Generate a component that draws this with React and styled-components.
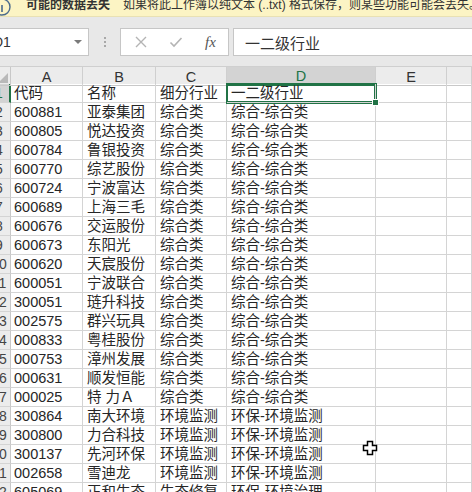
import React from "react";
import styled, { createGlobalStyle } from "styled-components";

const GlobalStyle = createGlobalStyle`
  html, body { margin: 0; padding: 0; background: #ffffff; overflow: hidden; }
  body { font-family: "Liberation Sans", "Noto Sans CJK SC", sans-serif; }
  * { box-sizing: border-box; }
`;

const FONT = `"Liberation Sans", "Noto Sans CJK SC", sans-serif`;

const Page = styled.div`
  width: 472px;
  height: 492px;
  overflow: hidden;
  position: relative;
  background: #fff;
`;

const Banner = styled.div`
  height: 17px;
  background: #fcf4c4;
  border-bottom: 1px solid #e9e1b4;
  display: flex;
  align-items: flex-end;
  overflow: hidden;
  font-family: ${FONT};
  font-size: 12px;
  line-height: 14px;
  color: #333;
  padding-bottom: 4px;
`;

const InfoIcon = styled.svg`
  width: 16px;
  height: 17px;
  flex: none;
  margin-left: -3px;
  align-self: flex-start;
`;

const BannerTitle = styled.span`
  font-weight: bold;
  margin-left: 13px;
  white-space: nowrap;
`;

const BannerText = styled.span`
  margin-left: 13px;
  white-space: nowrap;
`;

const Toolbar = styled.div`
  height: 49px;
  background: #e8e8e8;
  padding-top: 11px;
  display: flex;
  align-items: flex-start;
`;

const NameBox = styled.div`
  width: 89px;
  height: 28px;
  background: #fff;
  border: 1px solid #c6c6c6;
  border-left: none;
  display: flex;
  align-items: center;
  justify-content: space-between;
  font-family: ${FONT};
  font-size: 14px;
  color: #333;
  padding-right: 6px;
`;

const NameText = styled.span`
  margin-left: -7px;
`;

const DropArrow = styled.span`
  width: 0;
  height: 0;
  border-left: 4px solid transparent;
  border-right: 4px solid transparent;
  border-top: 4px solid #7a7a7a;
`;

const Grip = styled.div`
  width: 31px;
  height: 28px;
  display: flex;
  flex-direction: column;
  align-items: center;
  justify-content: center;
  gap: 2px;
`;

const GripDot = styled.span`
  width: 2px;
  height: 2px;
  background: #a8a8a8;
`;

const ActionBox = styled.div`
  width: 109px;
  height: 28px;
  background: #fff;
  border: 1px solid #c6c6c6;
  display: flex;
  align-items: center;
  padding-left: 13px;
`;

const ActionIcon = styled.svg`
  width: 14px;
  height: 14px;
  flex: none;
  margin-right: ${(p) => p.$gap}px;
`;

const Fx = styled.span`
  font-family: "Liberation Serif", serif;
  font-style: italic;
  font-size: 15px;
  color: #555;
`;

const FormulaInput = styled.div`
  flex: 1;
  height: 28px;
  margin-left: 4px;
  background: #fff;
  border: 1px solid #c6c6c6;
  border-right: none;
  display: flex;
  align-items: center;
  padding-left: 11px;
  font-family: ${FONT};
  font-size: 15px;
  color: #333;
`;

const COLS = "11px 72px 73px 71px 149px 71px 1fr";

const Grid = styled.div`
  display: grid;
  grid-template-columns: ${COLS};
  grid-auto-rows: 19px;
  font-family: ${FONT};
  font-size: 14.5px;
  color: #262626;
`;

const HeaderRow = styled.div`
  display: grid;
  grid-template-columns: ${COLS};
  height: 18px;
  background: #ececec;
  border-top: 1px solid #cfcfcf;
  font-family: ${FONT};
  font-size: 14.5px;
`;

const Corner = styled.div`
  border-right: 1px solid #c8c8c8;
  border-bottom: 1px solid #c8c8c8;
  position: relative;
  overflow: hidden;
`;

const CornerTri = styled.span`
  position: absolute;
  right: 2px;
  bottom: 2px;
  width: 0;
  height: 0;
  border-left: 10px solid transparent;
  border-bottom: 10px solid #b9b9b9;
`;

const ColHead = styled.div`
  display: flex;
  align-items: center;
  justify-content: center;
  line-height: 16px;
  border-right: 1px solid #cfcfcf;
  border-bottom: ${(p) => (p.$active ? "2px solid #217346" : "1px solid #c8c8c8")};
  background: ${(p) => (p.$active ? "#d3d3d3" : "transparent")};
  color: ${(p) => (p.$active ? "#217346" : "#333")};
  padding-top: 1px;
`;

const RowHead = styled.div`
  background: ${(p) => (p.$active ? "#d3d3d3" : "#ececec")};
  border-right: ${(p) => (p.$active ? "2px solid #217346" : "1px solid #c8c8c8")};
  border-bottom: 1px solid #d4d4d4;
  overflow: hidden;
  display: flex;
  align-items: center;
`;

const RowNum = styled.span`
  flex: none;
  width: 24px;
  margin-left: -13px;
  text-align: center;
  font-size: 14px;
  line-height: 18px;
  color: ${(p) => (p.$active ? "#217346" : "#444")};
`;

const Cell = styled.div`
  position: relative;
  border-right: 1px solid #d4d4d4;
  border-bottom: 1px solid #d4d4d4;
  padding-left: ${(p) => p.$pad}px;
  line-height: 18px;
  white-space: nowrap;
  overflow: ${(p) => (p.$selected ? "visible" : "hidden")};
  z-index: ${(p) => (p.$selected ? 2 : 0)};
  ${(p) =>
    p.$selected &&
    `box-shadow: 0 0 0 1px #217346, inset 0 0 0 1px #217346;`}
`;

const Handle = styled.span`
  position: absolute;
  right: -4px;
  bottom: -4px;
  width: 7px;
  height: 7px;
  background: #217346;
  border: 1px solid #fff;
`;

const Cursor = styled.svg`
  position: absolute;
  left: 362px;
  top: 440px;
  width: 16px;
  height: 16px;
  z-index: 5;
`;

const rows = [
  ["代码", "名称", "细分行业", "一二级行业"],
  ["600881", "亚泰集团", "综合类", "综合-综合类"],
  ["600805", "悦达投资", "综合类", "综合-综合类"],
  ["600784", "鲁银投资", "综合类", "综合-综合类"],
  ["600770", "综艺股份", "综合类", "综合-综合类"],
  ["600724", "宁波富达", "综合类", "综合-综合类"],
  ["600689", "上海三毛", "综合类", "综合-综合类"],
  ["600676", "交运股份", "综合类", "综合-综合类"],
  ["600673", "东阳光", "综合类", "综合-综合类"],
  ["600620", "天宸股份", "综合类", "综合-综合类"],
  ["600051", "宁波联合", "综合类", "综合-综合类"],
  ["300051", "琏升科技", "综合类", "综合-综合类"],
  ["002575", "群兴玩具", "综合类", "综合-综合类"],
  ["000833", "粤桂股份", "综合类", "综合-综合类"],
  ["000753", "漳州发展", "综合类", "综合-综合类"],
  ["000631", "顺发恒能", "综合类", "综合-综合类"],
  ["000025", "特 力Ａ", "综合类", "综合-综合类"],
  ["300864", "南大环境", "环境监测", "环保-环境监测"],
  ["300800", "力合科技", "环境监测", "环保-环境监测"],
  ["300137", "先河环保", "环境监测", "环保-环境监测"],
  ["002658", "雪迪龙", "环境监测", "环保-环境监测"],
  ["605069", "正和生态", "生态修复", "环保-环境治理"],
  ["", "", "", ""],
];

const pads = [3, 4, 4, 4];

export default function App() {
  return (
    <Page>
      <GlobalStyle />
      <Banner>
        <InfoIcon viewBox="0 0 16 17">
          <circle cx="5" cy="7" r="8" fill="none" stroke="#4a6a8c" strokeWidth="1.4" />
          <line x1="5" y1="5" x2="5" y2="12" stroke="#4a6a8c" strokeWidth="1.6" />
        </InfoIcon>
        <BannerTitle>可能的数据丢失</BannerTitle>
        <BannerText>如果将此工作簿以纯文本 (..txt) 格式保存，则某些功能可能会丢失。</BannerText>
      </Banner>
      <Toolbar>
        <NameBox>
          <NameText>D1</NameText>
          <DropArrow />
        </NameBox>
        <Grip>
          <GripDot />
          <GripDot />
          <GripDot />
        </Grip>
        <ActionBox>
          <ActionIcon viewBox="0 0 14 14" $gap={21}>
            <path d="M2 2 L12 12 M12 2 L2 12" stroke="#b4b4b4" strokeWidth="1.4" fill="none" />
          </ActionIcon>
          <ActionIcon viewBox="0 0 14 14" $gap={22}>
            <path d="M1.5 7.5 L5 11 L12.5 3" stroke="#b4b4b4" strokeWidth="1.6" fill="none" />
          </ActionIcon>
          <Fx>fx</Fx>
        </ActionBox>
        <FormulaInput>一二级行业</FormulaInput>
      </Toolbar>
      <HeaderRow>
        <Corner>
          <CornerTri />
        </Corner>
        {["A", "B", "C", "D", "E", ""].map((c) => (
          <ColHead key={c || "F"} $active={c === "D"}>
            {c}
          </ColHead>
        ))}
      </HeaderRow>
      <Grid>
        {rows.map((r, i) => (
          <React.Fragment key={i}>
            <RowHead $active={i === 0}>
              <RowNum $active={i === 0}>{i + 1}</RowNum>
            </RowHead>
            {r.map((v, j) => (
              <Cell key={j} $pad={pads[j]} $selected={i === 0 && j === 3}>
                {v}
                {i === 0 && j === 3 && <Handle />}
              </Cell>
            ))}
            <Cell $pad={0} />
            <Cell $pad={0} />
          </React.Fragment>
        ))}
      </Grid>
      <Cursor viewBox="0 0 16 16">
        <path
          d="M5.5 1.5 H10.5 V5.5 H14.5 V10.5 H10.5 V14.5 H5.5 V10.5 H1.5 V5.5 H5.5 Z"
          fill="#fff"
          stroke="#000"
          strokeWidth="1.5"
        />
      </Cursor>
    </Page>
  );
}
